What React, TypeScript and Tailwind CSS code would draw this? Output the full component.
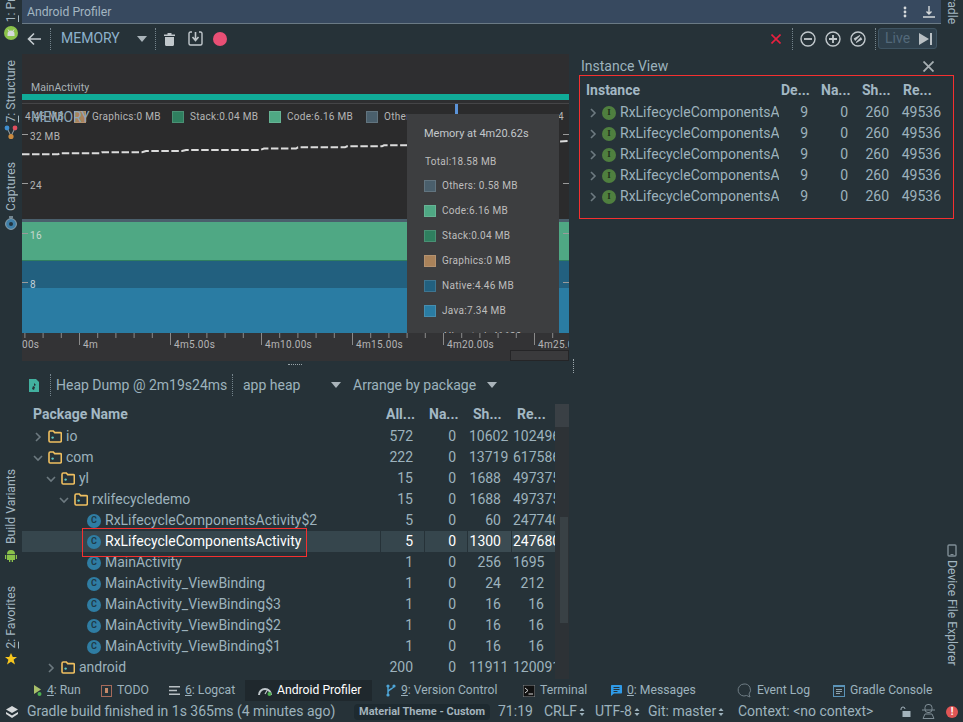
import React from 'react';

const Sep = ({ className = 'h-[22px]' }: { className?: string }) => (
  <div className={`w-0 border-l border-dotted border-[#75848c] shrink-0 ${className}`} />
);

const Caret = ({ className = '' }: { className?: string }) => (
  <svg width="10" height="6" viewBox="0 0 10 6" className={`shrink-0 ${className}`}>
    <path d="M0 0h10L5 6z" fill="#aab4ba" />
  </svg>
);

const Folder = () => (
  <svg width="14" height="13" viewBox="0 0 14 13" className="shrink-0">
    <path d="M1 2.500C1 1.700 1.500 1 2.300 1h3l1.400 1.600h5.600c.6 0 1 .5 1 1v7.200c0 .7-.5 1.200-1.200 1.200H2.200c-.7 0-1.200-.5-1.200-1.200z" fill="none" stroke="#f0c060" strokeWidth="1.600" />
    <circle cx="4.600" cy="7.600" r="1.200" fill="#5fc4c0" />
  </svg>
);

const Chevron = ({ open, color = '#6d7a80' }: { open: boolean; color?: string }) => (
  <svg width="10" height="10" viewBox="0 0 10 10" className="shrink-0">
    {open ? (
      <path d="M1 3l4 4 4-4" fill="none" stroke={color} strokeWidth="1.600" />
    ) : (
      <path d="M3 1l4 4-4 4" fill="none" stroke={color} strokeWidth="1.600" />
    )}
  </svg>
);

const ClassIcon = () => (
  <span className="w-[14px] h-[14px] rounded-full bg-[#2f7da3] text-[#1f3a48] text-[9px] font-bold flex items-center justify-center shrink-0">
    C
  </span>
);

const InterfaceIcon = () => (
  <span className="w-[14px] h-[14px] rounded-full bg-[#4f7f3f] text-[#1e2f1a] text-[9px] font-bold flex items-center justify-center shrink-0 [font-family:'Liberation_Serif',serif]">
    I
  </span>
);

const Droid = ({ size = 14 }: { size?: number }) => (
  <svg width={size} height={size} viewBox="0 0 14 14">
    <circle cx="7" cy="7" r="7" fill="#8bc34a" />
    <path d="M3.500 8a3.500 3.500 0 0 1 7 0v2h-7z" fill="#d5d9db" />
    <path d="M5 5L4 3.500M9 5l1-1.500" stroke="#d5d9db" />
  </svg>
);

const VText = ({ children, className = '' }: { children: React.ReactNode; className?: string }) => (
  <div className={`[writing-mode:vertical-rl] rotate-180 whitespace-nowrap text-[12.2px] leading-[22px] text-[#a3b6c1] ${className}`}>
    {children}
  </div>
);

const LeftRail = () => (
  <div className="w-[22px] shrink-0 flex flex-col items-center overflow-hidden">
    <div className="h-[22px] flex flex-col justify-end overflow-hidden shrink-0">
      <VText>
        <span className="underline">1</span>: Project
      </VText>
    </div>
    <div className="mt-[4px] shrink-0">
      <Droid size={14} />
    </div>
    <VText className="mt-[20px]">
      <span className="underline">7</span>: Structure
    </VText>
    <svg width="14" height="15" viewBox="0 0 14 15" className="mt-[3px] shrink-0">
      <path d="M3 3l4 8M11 3l-4 8" stroke="#9aa7ad" />
      <circle cx="3" cy="3" r="2.400" fill="#3f8fd0" />
      <circle cx="11" cy="3" r="2.400" fill="#e04f5f" />
      <circle cx="7" cy="11.500" r="2.600" fill="#c98a3f" />
    </svg>
    <VText className="mt-[22px]">Captures</VText>
    <svg width="14" height="14" viewBox="0 0 14 14" className="mt-[5px] shrink-0">
      <circle cx="7" cy="8" r="5.400" fill="#3f7fa8" stroke="#8ea2ad" />
      <circle cx="7" cy="8" r="2" fill="#22343f" />
      <path d="M5 1h4" stroke="#8ea2ad" strokeWidth="1.500" />
    </svg>
    <VText className="mt-[239px]">Build Variants</VText>
    <svg width="14" height="13" viewBox="0 0 14 13" className="mt-[5px] shrink-0">
      <path d="M3 5a4 4 0 0 1 8 0zM3 5.800h8V11H3zM1 6h1.200v4H1zM11.800 6H13v4h-1.200zM5 11h1.300v2H5zM7.700 11H9v2H7.700z" fill="#8bc34a" />
    </svg>
    <VText className="mt-[24px]">
      <span className="underline">2</span>: Favorites
    </VText>
    <svg width="12" height="12" viewBox="0 0 12 12" className="mt-[4px] shrink-0">
      <path d="M6 0l1.800 4H12L8.600 6.800 10 11.500 6 8.800 2 11.500 3.400 6.800 0 4h4.200z" fill="#f6c61e" />
    </svg>
  </div>
);

const RightRail = () => (
  <div className="w-[22px] shrink-0 flex flex-col items-center overflow-hidden">
    <div className="h-[24px] flex flex-col justify-end overflow-hidden shrink-0">
      <div className="[writing-mode:vertical-rl] text-[12.2px] leading-[22px] text-[#a3b6c1] whitespace-nowrap">Gradle</div>
    </div>
    <svg width="10" height="13" viewBox="0 0 10 13" className="mt-[520px] shrink-0">
      <rect x="1" y="1" width="8" height="11" rx="1" fill="none" stroke="#7f8d95" strokeWidth="1.400" />
      <rect x="3.500" y="10" width="3" height="1" fill="#7f8d95" />
    </svg>
    <div className="[writing-mode:vertical-rl] mt-[3px] text-[12.2px] leading-[22px] text-[#a3b6c1] whitespace-nowrap">Device File Explorer</div>
  </div>
);

const Toolbar = () => (
  <div className="h-[30px] flex items-center shrink-0 bg-[#263238] pl-[5px] pb-[1px]">
    <svg width="14" height="14" viewBox="0 0 14 14" className="shrink-0">
      <path d="M14 7H2M7 1.500L1.500 7 7 12.500" fill="none" stroke="#c5ccd0" strokeWidth="1.600" />
    </svg>
    <Sep className="h-[22px] ml-[9px]" />
    <span className="ml-[10px] text-[14px] text-[#8db1cc] w-[60px]">MEMORY</span>
    <Caret className="ml-[16px]" />
    <Sep className="h-[22px] ml-[8px]" />
    <svg width="11" height="14" viewBox="0 0 11 14" className="ml-[8px] shrink-0">
      <path d="M0 2.500h11V4H0zM3.500 1h4v1.500h-4zM1 5h9v7.500c0 .8-.6 1.500-1.400 1.500H2.400C1.600 14 1 13.300 1 12.500z" fill="#c1c8cc" />
    </svg>
    <svg width="15" height="15" viewBox="0 0 15 15" className="ml-[13px] shrink-0">
      <path d="M4 1H2.500C1.600 1 1 1.600 1 2.500v10C1 13.400 1.600 14 2.500 14h10c.9 0 1.500-.6 1.500-1.500v-10C14 1.600 13.400 1 12.500 1H11" fill="none" stroke="#c1c8cc" strokeWidth="1.400" />
      <path d="M7.500 1v7M4.500 6l3 3.500 3-3.500" fill="none" stroke="#c1c8cc" strokeWidth="1.600" />
    </svg>
    <span className="ml-[10px] w-[14px] h-[14px] rounded-full bg-[#e94f75] shrink-0" />
    <div className="flex-1" />
    <svg width="10" height="10" viewBox="0 0 10 10" className="shrink-0">
      <path d="M0.500 0.500l9 9M9.500 0.500l-9 9" stroke="#e8203f" strokeWidth="1.600" />
    </svg>
    <Sep className="h-[22px] ml-[11px]" />
    <svg width="16" height="16" viewBox="0 0 16 16" className="ml-[7px] shrink-0">
      <circle cx="8" cy="8" r="7" fill="none" stroke="#c1c8cc" strokeWidth="1.400" />
      <path d="M4 8h8" stroke="#c1c8cc" strokeWidth="1.800" />
    </svg>
    <svg width="16" height="16" viewBox="0 0 16 16" className="ml-[9px] shrink-0">
      <circle cx="8" cy="8" r="7" fill="none" stroke="#c1c8cc" strokeWidth="1.400" />
      <path d="M4 8h8M8 4v8" stroke="#c1c8cc" strokeWidth="1.800" />
    </svg>
    <svg width="16" height="16" viewBox="0 0 16 16" className="ml-[9px] shrink-0">
      <circle cx="8" cy="8" r="7" fill="none" stroke="#c1c8cc" strokeWidth="1.400" />
      <rect x="4.500" y="5.500" width="7" height="5" fill="#c1c8cc" transform="rotate(-30 8 8)" />
      <path d="M5 11l6-6" stroke="#263238" strokeWidth="1.200" />
    </svg>
    <Sep className="h-[22px] ml-[9px]" />
    <div className="ml-[2px] mr-[4px] w-[59px] h-[21px] rounded-[3px] border border-[#3e5361] bg-[#2f404c] flex items-center pl-[6px] gap-[9px] shrink-0">
      <span className="text-[14px] text-[#53697a]">Live</span>
      <svg width="13" height="12" viewBox="0 0 13 12">
        <path d="M0 0l10 6-10 6zM11 0h2v12h-2z" fill="#b9c0c4" />
      </svg>
    </div>
  </div>
);

const legend = [
  { color: 'bg-[#a9825a]', label: 'Graphics:0 MB', w: 'w-[98px]' },
  { color: 'bg-[#2f7f5f]', label: 'Stack:0.04 MB', w: 'w-[97px]' },
  { color: 'bg-[#4fa884]', label: 'Code:6.16 MB', w: 'w-[97px]' },
  // the tooltip sits right after this one, so the label gets cut there
  { color: 'bg-[#4a5f6c]', label: 'Others:0.58 MB', w: 'w-[41px] overflow-hidden' },
];

const tooltipRows = [
  { color: 'bg-[#4a5f6c]', label: 'Others: 0.58 MB' },
  { color: 'bg-[#4fa884]', label: 'Code:6.16 MB' },
  { color: 'bg-[#2f7f5f]', label: 'Stack:0.04 MB' },
  { color: 'bg-[#a9825a]', label: 'Graphics:0 MB' },
  { color: 'bg-[#22607f]', label: 'Native:4.46 MB' },
  { color: 'bg-[#2a7ca3]', label: 'Java:7.34 MB' },
];

const axisLabels = ['4m', '4m5.00s', '4m10.00s', '4m15.00s', '4m20.00s', '4m25.00s'];

const ticks = Array.from({ length: 31 }, (_, i) => i);

const MemoryChart = () => (
  <div className="relative h-[307px] flex flex-col bg-[#2e2e30] overflow-hidden shrink-0">
    <div className="h-[40px] shrink-0 flex items-end pl-[9px] text-[10.5px] leading-[16px] tracking-[0.05px] text-[#a9b2b7]">
      <span className="mb-[-2px]">MainActivity</span>
    </div>
    <div className="h-[6px] bg-[#10ab98] shrink-0" />
    <div className="h-[3px] shrink-0" />
    <div className="h-px bg-[#454547] shrink-0" />
    <div className="h-[115px] bg-[#2b2b2c] shrink-0" />
    <div className="h-[3px] bg-[#4a5f6c] shrink-0" />
    <div className="h-[38px] bg-[#4fa884] shrink-0" />
    <div className="h-px bg-[#2f7f5f] shrink-0" />
    <div className="h-[27px] bg-[#22607f] shrink-0" />
    <div className="h-[45px] bg-[#2a7ca3] shrink-0" />
    <div className="h-[28px] bg-[#333335] shrink-0" />

    <svg width="547" height="307" viewBox="0 0 547 307" className="absolute inset-0">
      <polyline points="0,100.300 36,100.300 38,99.300 78,99.300 80,98.300 120,98.300 124,97 160,97 164,96 238,96 242,94.500 274,94.500 276,93.300 323,93.300 325,92.300 360,92.300 362,91.300 400,91.300 537,87.500 547,87" fill="none" stroke="#dcdcdc" strokeWidth="2" strokeDasharray="7.500 2.500" />
      {[80, 129, 179, 228].map((y) => (
        <g key={y}>
          <path d={`M0 ${y + 0.5}h6`} stroke="#9a9a9a" />
          <path d={`M541 ${y + 0.5}h6`} stroke="#9a9a9a" />
        </g>
      ))}
      {ticks.map((i) => (
        <path key={i} d={`M${2.900 + i * 18.2} 279v${i % 5 === 3 ? 12 : 5}`} stroke="#8a8a8a" />
      ))}
    </svg>

    <div className="absolute left-[3px] top-[56px] flex items-center text-[10px] leading-[14px] tracking-[0.3px] text-[#b5b5b5] whitespace-nowrap">
      <span className="w-[49px]">4.46 MB</span>
      {legend.map((l) => (
        <div key={l.label} className={`flex items-center gap-[6px] shrink-0 ${l.w}`}>
          <span className={`w-[12px] h-[12px] shrink-0 ${l.color} border border-[#ffffff22]`} />
          <span>{l.label}</span>
        </div>
      ))}
    </div>
    <span className="absolute left-[9px] top-[55px] text-[14px] leading-[16px] text-[#8ba6b8]">MEMORY</span>
    <span className="absolute left-[8px] top-[76px] text-[10px] leading-[14px] tracking-[0.3px] text-[#b5b5b5]">32 MB</span>
    <span className="absolute left-[8px] top-[125px] text-[10px] leading-[14px] tracking-[0.3px] text-[#b5b5b5]">24</span>
    <span className="absolute left-[8px] top-[175px] text-[10px] leading-[14px] tracking-[0.3px] text-[#c8d8d0]">16</span>
    <span className="absolute left-[8px] top-[224px] text-[10px] leading-[14px] tracking-[0.3px] text-[#c0d0da]">8</span>
    <span className="absolute left-[536px] top-[56px] text-[10px] leading-[14px] text-[#b5b5b5]">4</span>

    <span className="absolute left-[433px] top-[50px] w-[3px] h-[11px] bg-[#5b93d8]" />

    <div className="absolute left-[385px] top-[60px] w-[152px] h-[219px] bg-[#3d3e40] overflow-hidden pl-[17px] pt-[13px] text-[10px] leading-[14px] tracking-[0.3px] text-[#bdbdbd]">
      <div className="text-[#c3c8cc] tracking-normal text-[11px]">Memory at 4m20.62s</div>
      <div className="mt-[14px] ml-[1px]">Total:18.58 MB</div>
      <div className="flex flex-col gap-[13px] mt-[11px]">
        {tooltipRows.map((r) => (
          <div key={r.label} className="flex items-center gap-[6px] h-[12px]">
            <span className={`w-[12px] h-[12px] shrink-0 ${r.color} border border-[#ffffff22]`} />
            <span>{r.label}</span>
          </div>
        ))}
        <div className="pl-[18px]">Allocated: 41630</div>
      </div>
    </div>

    <div className="absolute left-[0px] top-[279px] h-[28px] pt-[5px] flex text-[10px] leading-[14px] tracking-[0.3px] text-[#b5b5b5] whitespace-nowrap">
      <span className="w-[61px]">00s</span>
      {axisLabels.map((a) => (
        <span key={a} className="w-[91px] shrink-0">{a}</span>
      ))}
    </div>
    <div className="absolute left-[488px] top-[296px] w-[59px] h-[11px] bg-[#3a3a3c] border border-[#252527]" />
  </div>
);

type TreeRow = {
  name: string;
  kind: 'closed' | 'open' | 'class';
  indent: string;
  all: string;
  na: string;
  sh: string;
  re: string;
  selected?: boolean;
};

const treeRows: TreeRow[] = [
  { name: 'io', kind: 'closed', indent: 'pl-[11px]', all: '572', na: '0', sh: '10602', re: '1024960' },
  { name: 'com', kind: 'open', indent: 'pl-[11px]', all: '222', na: '0', sh: '13719', re: '6175860' },
  { name: 'yl', kind: 'open', indent: 'pl-[24px]', all: '15', na: '0', sh: '1688', re: '4973756' },
  { name: 'rxlifecycledemo', kind: 'open', indent: 'pl-[37px]', all: '15', na: '0', sh: '1688', re: '4973756' },
  { name: 'RxLifecycleComponentsActivity$2', kind: 'class', indent: 'pl-[65px]', all: '5', na: '0', sh: '60', re: '2477400' },
  { name: 'RxLifecycleComponentsActivity', kind: 'class', indent: 'pl-[65px]', all: '5', na: '0', sh: '1300', re: '2476800', selected: true },
  { name: 'MainActivity', kind: 'class', indent: 'pl-[65px]', all: '1', na: '0', sh: '256', re: '1695' },
  { name: 'MainActivity_ViewBinding', kind: 'class', indent: 'pl-[65px]', all: '1', na: '0', sh: '24', re: '212' },
  { name: 'MainActivity_ViewBinding$3', kind: 'class', indent: 'pl-[65px]', all: '1', na: '0', sh: '16', re: '16' },
  { name: 'MainActivity_ViewBinding$2', kind: 'class', indent: 'pl-[65px]', all: '1', na: '0', sh: '16', re: '16' },
  { name: 'MainActivity_ViewBinding$1', kind: 'class', indent: 'pl-[65px]', all: '1', na: '0', sh: '16', re: '16' },
  { name: 'android', kind: 'closed', indent: 'pl-[24px]', all: '200', na: '0', sh: '11911', re: '1200917' },
];

const Num = ({ value, className }: { value: string; className: string }) => (
  <div className={`flex overflow-visible ${className}`}>
    <span className="ml-auto shrink-0">{value}</span>
  </div>
);

const TreeTable = () => (
  <div className="flex h-[275px] overflow-hidden">
    <div className="w-[533px] shrink-0 overflow-hidden text-[14px] leading-[21px] text-[#9db2bd]">
      <div className="h-[22px] flex font-bold text-[#a3b8c4]">
        <div className="w-[358px] pl-[11px]">Package Name</div>
        <div className="w-[44px] pl-[6px]">All...</div>
        <div className="w-[43px] pl-[5px]">Na...</div>
        <div className="w-[44px] pl-[6px]">Sh...</div>
        <div className="w-[44px] pl-[6px]">Re...</div>
      </div>
      {treeRows.map((r) => (
        <div key={r.name} className={`h-[21px] flex whitespace-nowrap ${r.selected ? 'text-white' : ''}`}>
          <div className={`w-[358px] flex items-center gap-[4px] ${r.indent} ${r.selected ? 'bg-[#36464d]' : ''}`}>
            {r.kind === 'class' ? (
              <ClassIcon />
            ) : (
              <>
                <Chevron open={r.kind === 'open'} />
                <span className="ml-[1px]"><Folder /></span>
              </>
            )}
            <span>{r.name}</span>
          </div>
          <Num value={r.all} className={`w-[44px] pr-[11px] ${r.selected ? 'bg-[#36464d] shadow-[inset_1px_0_0_#263238]' : ''}`} />
          <Num value={r.na} className={`w-[43px] pr-[11px] ${r.selected ? 'bg-[#36464d] shadow-[inset_1px_0_0_#263238]' : ''}`} />
          <Num value={r.sh} className={`w-[44px] pl-[2px] pr-[10px] ${r.selected ? 'bg-[#3b4b52] shadow-[inset_1px_0_0_#263238]' : ''}`} />
          <Num value={r.re} className={`w-[44px] pl-[2px] pr-[11px] ${r.selected ? 'bg-[#3b4b52] shadow-[inset_1px_0_0_#263238]' : ''}`} />
        </div>
      ))}
    </div>
    <div className="w-[14px] shrink-0 bg-[#2d3236] flex flex-col">
      <div className="h-[23px] bg-[#3a4045] shrink-0" />
      <div className="ml-[5px] mt-[90px] w-[8px] h-[106px] bg-[#394145]" />
    </div>
  </div>
);

const LowerPanel = () => (
  <div className="relative flex-1 flex flex-col">
    <div className="h-[43px] flex items-end pb-[7px] pl-[6px] shrink-0 text-[14px] text-[#9db2bd]">
      <div className="h-[24px] flex items-center">
        <svg width="12" height="15" viewBox="0 0 12 15" className="shrink-0">
          <path d="M1 1h7l3 3v10H1z" fill="#42b09f" />
          <path d="M4 11l1-3 2 1-1 3zM6 5l2 2-2 1z" fill="#263238" />
        </svg>
        <Sep className="h-[22px] ml-[10px]" />
        <span className="ml-[5px] w-[170px] whitespace-nowrap">Heap Dump @ 2m19s24ms</span>
        <Sep className="h-[22px] ml-[6px]" />
        <span className="ml-[10px] w-[57px] whitespace-nowrap">app heap</span>
        <Caret className="ml-[31px]" />
        <span className="ml-[12px] w-[124px] whitespace-nowrap">Arrange by package</span>
        <Caret className="ml-[10px]" />
      </div>
    </div>
    <TreeTable />
    <div className="absolute left-[60px] top-[167px] w-[225px] h-[29px] border border-[#f53030]" />
    <div className="absolute left-[266px] top-[3px] w-[14px] border-t border-dotted border-[#9aa5aa]" />
    <div className="absolute left-[551px] top-[-2px] h-[14px] border-l border-dotted border-[#9aa5aa]" />
  </div>
);

const instanceRows = [0, 1, 2, 3, 4];

const InstanceView = () => (
  <div className="flex-1 min-w-0 relative pl-[12px] pt-[3px]">
    <div className="flex items-center h-[18px] text-[14px] text-[#9db2bd] pr-[7px]">
      <span>Instance View</span>
      <svg width="11" height="11" viewBox="0 0 11 11" className="ml-auto">
        <path d="M0.500 0.500l10 10M10.500 0.500l-10 10" stroke="#a6aeb2" strokeWidth="1.800" />
      </svg>
    </div>
    <div className="relative ml-[-2px] mt-0 w-[375px] h-[144px] border border-[#f53030] pt-[4px] text-[14px] leading-[21px] text-[#9db2bd] whitespace-nowrap">
      <div className="flex h-[22px] font-bold text-[#a3b8c4]">
        <div className="w-[195px] pl-[6px]">Instance</div>
        <div className="w-[40px] pl-[6px]">De...</div>
        <div className="w-[41px] pl-[6px]">Na...</div>
        <div className="w-[41px] pl-[6px]">Sh...</div>
        <div className="w-[40px] pl-[6px]">Re...</div>
      </div>
      {instanceRows.map((i) => (
        <div key={i} className="flex h-[21px]">
          <div className="w-[199px] flex items-center pl-[8px] overflow-hidden">
            <Chevron open={false} />
            <span className="ml-[4px]"><InterfaceIcon /></span>
            <span className="ml-[4px]">RxLifecycleComponentsActivity</span>
          </div>
          <div className="w-[29px] text-right">9</div>
          <div className="w-[40px] text-right">0</div>
          <div className="w-[41px] text-right">260</div>
          <div className="w-[52px] text-right">49536</div>
        </div>
      ))}
    </div>
  </div>
);

const BarItem = ({
  icon,
  children,
  className = '',
}: {
  icon: React.ReactNode;
  children: React.ReactNode;
  className?: string;
}) => (
  <div className={`flex items-center gap-[5px] whitespace-nowrap shrink-0 ${className}`}>
    {icon}
    <span>{children}</span>
  </div>
);

const ToolBar = () => (
  <div className="h-[21px] shrink-0 flex items-stretch text-[12.2px] leading-[21px] text-[#9db2bd] pl-[33px]">
    <BarItem
      className="w-[68px]"
      icon={
        <svg width="9" height="11" viewBox="0 0 9 11">
          <path d="M1 0l7 4.500-7 4.500z" fill="#a9c06a" />
          <circle cx="6.500" cy="9" r="2" fill="#4caf50" />
        </svg>
      }
    >
      <span className="underline">4</span>: Run
    </BarItem>
    <BarItem
      className="w-[68px]"
      icon={
        <svg width="11" height="12" viewBox="0 0 11 12">
          <rect x="0.500" y="0.500" width="10" height="11" fill="none" stroke="#a66a5a" />
          <rect x="4" y="3" width="3" height="5" fill="#c58a6a" />
        </svg>
      }
    >
      TODO
    </BarItem>
    <BarItem
      className="w-[76px]"
      icon={
        <svg width="11" height="9" viewBox="0 0 11 9">
          <path d="M0 0h11v1.500H0zM0 3.700h8v1.500H0zM0 7.400h11V9H0z" fill="#b9c0c4" />
        </svg>
      }
    >
      <span className="underline">6</span>: Logcat
    </BarItem>
    <BarItem
      className="w-[127px] bg-[#1f282d] pl-[13px] text-white gap-[3px]"
      icon={
        <svg width="14" height="11" viewBox="0 0 14 11">
          <path d="M1 10a6 6 0 0 1 12 0" fill="none" stroke="#c1c8cc" strokeWidth="2" />
          <path d="M7 9l3-5" stroke="#c1c8cc" strokeWidth="1.200" />
          <circle cx="11.500" cy="9" r="2" fill="#4caf50" />
        </svg>
      }
    >
      Android Profiler
    </BarItem>
    <BarItem
      className="ml-[14px] w-[137px]"
      icon={
        <svg width="10" height="13" viewBox="0 0 10 13">
          <path d="M2 2v9M8 2c0 3-6 3-6 6" fill="none" stroke="#4ea6d8" strokeWidth="1.400" />
          <circle cx="2" cy="2" r="1.600" fill="#4ea6d8" />
          <circle cx="8" cy="2" r="1.600" fill="#4ea6d8" />
          <circle cx="2" cy="11" r="1.600" fill="#4ea6d8" />
        </svg>
      }
    >
      <span className="underline">9</span>: Version Control
    </BarItem>
    <BarItem
      className="w-[88px]"
      icon={
        <svg width="12" height="12" viewBox="0 0 12 12">
          <rect width="12" height="12" fill="#111" stroke="#8a8f92" />
          <path d="M2 3l3 2.500-3 2.500M5.500 9H10" fill="none" stroke="#d5d5d5" />
        </svg>
      }
    >
      Terminal
    </BarItem>
    <BarItem
      className="w-[126px]"
      icon={
        <svg width="11" height="11" viewBox="0 0 11 11">
          <path d="M1 0h9c.6 0 1 .4 1 1v6.500c0 .6-.4 1-1 1H3L0 11V1c0-.6.4-1 1-1z" fill="#2f9be8" />
          <path d="M2.500 2.500h6M2.500 4.500h6M2.500 6.500h4" stroke="#263238" />
        </svg>
      }
    >
      <span className="underline">0</span>: Messages
    </BarItem>
    <BarItem
      className="w-[96px]"
      icon={
        <svg width="15" height="15" viewBox="0 0 15 15">
          <path d="M7 1a6 6 0 1 0 2.500 11.500L13 14l-1-3A6 6 0 0 0 7 1z" fill="none" stroke="#6f7d85" />
        </svg>
      }
    >
      Event Log
    </BarItem>
    <BarItem
      icon={
        <svg width="12" height="12" viewBox="0 0 12 12">
          <rect x="0.500" y="0.500" width="11" height="11" fill="none" stroke="#5a93b8" />
          <path d="M0 0h12v2H0z" fill="#5a93b8" />
          <path d="M3 4.500h6M3 6.500h6M3 8.500h4" stroke="#8ea2ad" />
        </svg>
      }
    >
      Gradle Console
    </BarItem>
  </div>
);

const UpDown = () => (
  <svg width="6" height="10" viewBox="0 0 6 10" className="ml-[2px] shrink-0">
    <path d="M3 1l2.500 3h-5zM3 9L.500 6h5z" fill="#9db2bd" />
  </svg>
);

const StatusBar = () => (
  <div className="h-[21px] shrink-0 flex items-center text-[14px] text-[#9db2bd] whitespace-nowrap pl-[6px]">
    <svg width="12" height="12" viewBox="0 0 12 12" className="shrink-0">
      <path d="M6 0l6 3.500L6 7 0 3.500z" fill="#d5d9db" />
      <path d="M0 6l6 3.500L12 6v2l-6 4-6-4z" fill="#d5d9db" />
    </svg>
    <span className="ml-[9px] w-[304px]">Gradle build finished in 1s 365ms (4 minutes ago)</span>
    <span className="ml-[23px] w-[136px] h-[16px] rounded-[4px] bg-[#1e2a30] text-[11px] leading-[16px] font-bold text-[#a3b3bc] text-center">
      Material Theme - Custom
    </span>
    <span className="ml-[8px] w-[34px]">71:19</span>
    <span className="ml-[12px] w-[51px] flex items-center">CRLF<UpDown /></span>
    <span className="w-[53px] flex items-center">UTF-8<UpDown /></span>
    <span className="w-[90px] flex items-center">Git: master<UpDown /></span>
    <span className="w-[162px]">Context: &lt;no context&gt;</span>
    <svg width="11" height="12" viewBox="0 0 11 12" className="shrink-0">
      <path d="M1 4V3a2 2 0 0 1 4 0" fill="none" stroke="#a3b3bc" />
      <rect x="2.500" y="5" width="8" height="6" fill="#a3b3bc" />
    </svg>
    <svg width="13" height="15" viewBox="0 0 13 15" className="ml-[11px] shrink-0">
      <rect x="3" y="0.500" width="7" height="8" rx="3" fill="none" stroke="#7f8d95" />
      <path d="M0 6h13M3 10h7l2 4.500H1z" fill="none" stroke="#7f8d95" />
    </svg>
    <span className="ml-[11px] w-[12px] h-[12px] rounded-full bg-[#e05555] text-white text-[10px] leading-[12px] font-bold text-center shrink-0">!</span>
  </div>
);

export default function App() {
  return (
    <div className="w-[963px] h-[722px] overflow-hidden flex flex-col bg-[#263238] [font-family:Roboto,sans-serif]">
      <div className="h-[680px] shrink-0 flex relative">
        <LeftRail />
        <div className="w-[919px] shrink-0 flex flex-col">
          <div className="h-[24px] shrink-0 bg-[#37495f] border-b border-[#6a7a85] flex items-center pl-[5px] pr-[6px] text-[12.2px] text-[#a3b6c1]">
            <span className="mt-[2px]">Android Profiler</span>
            <svg width="4" height="12" viewBox="0 0 4 12" className="ml-auto">
              <circle cx="2" cy="2" r="1.400" fill="#d5d9db" />
              <circle cx="2" cy="6" r="1.400" fill="#d5d9db" />
              <circle cx="2" cy="10" r="1.400" fill="#d5d9db" />
            </svg>
            <svg width="12" height="12" viewBox="0 0 12 12" className="ml-[16px]">
              <path d="M6 0v8M3.500 5.500L6 8l2.500-2.500M0 11h12" fill="none" stroke="#d5d9db" strokeWidth="1.400" />
            </svg>
          </div>
          <Toolbar />
          <div className="flex-1 flex min-h-0">
            <div className="w-[547px] shrink-0 flex flex-col">
              <MemoryChart />
              <LowerPanel />
            </div>
            <InstanceView />
          </div>
        </div>
        <RightRail />
      </div>
      <ToolBar />
      <StatusBar />
    </div>
  );
}
